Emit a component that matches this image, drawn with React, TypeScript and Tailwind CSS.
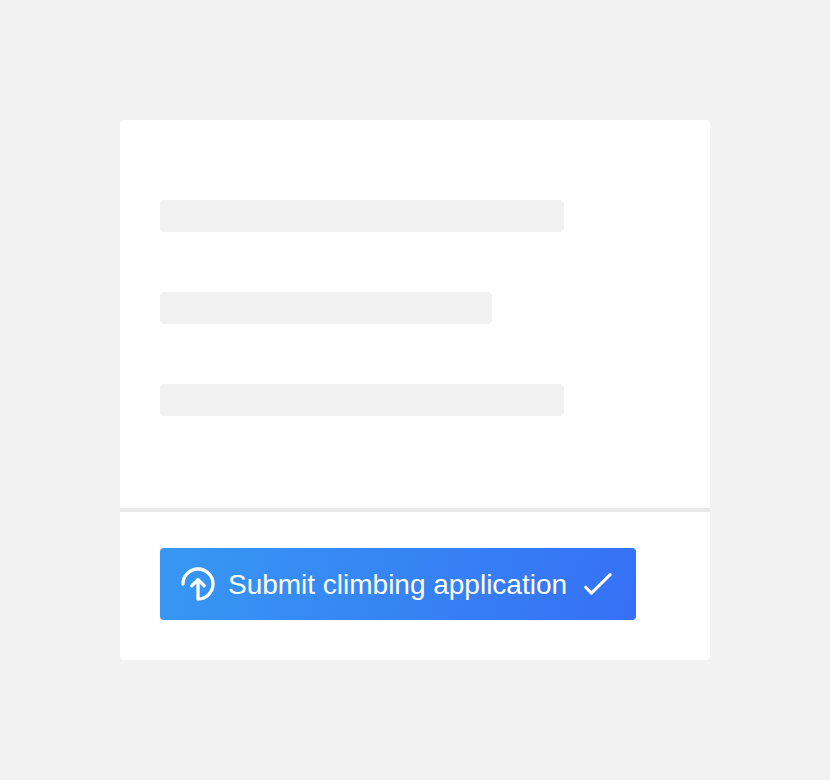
const lines = ['w-[404px]', 'w-[332px]', 'w-[404px]'];

function UploadIcon() {
  return (
    <svg className="h-9 w-9 shrink-0" viewBox="0 0 36 36" fill="none" stroke="currentColor" strokeWidth="3.3" strokeLinecap="round" strokeLinejoin="round">
      <path d="M3 18a15 15 0 1 1 15 15V14" />
      <path d="M11.8 19.7 18 13.7l6.2 6" />
    </svg>
  );
}

function CheckIcon() {
  return (
    <svg className="h-7 w-7 shrink-0" viewBox="0 0 28 28" fill="none" stroke="currentColor" strokeWidth="3" strokeLinecap="round" strokeLinejoin="round">
      <path d="M1.7 17.2 7.5 23.1 26.2 4.6" />
    </svg>
  );
}

export default function App() {
  return (
    <div className="flex h-[780px] w-[830px] items-center justify-center bg-[#f2f2f2] font-['Liberation_Sans',Arial,sans-serif]">
      <main className="flex h-[540px] w-[590px] flex-col rounded bg-white">
        <div className="flex h-[392px] flex-col gap-[60px] border-b-4 border-[#e9e9e9] px-10 pt-20">
          {lines.map((width, i) => (
            <div key={i} className={`h-8 rounded bg-[#f2f2f2] ${width}`} />
          ))}
        </div>
        <div className="px-10 pt-9">
          <button className="flex h-[72px] w-[476px] items-center rounded bg-[linear-gradient(110deg,#3798f3,#3670f5)] pl-5 text-white">
            <UploadIcon />
            <span className="ml-3 w-[356px] pt-0.5 text-left text-[28px] leading-9 tracking-[-0.01px] whitespace-nowrap">Submit climbing application</span>
            <CheckIcon />
          </button>
        </div>
      </main>
    </div>
  );
}
